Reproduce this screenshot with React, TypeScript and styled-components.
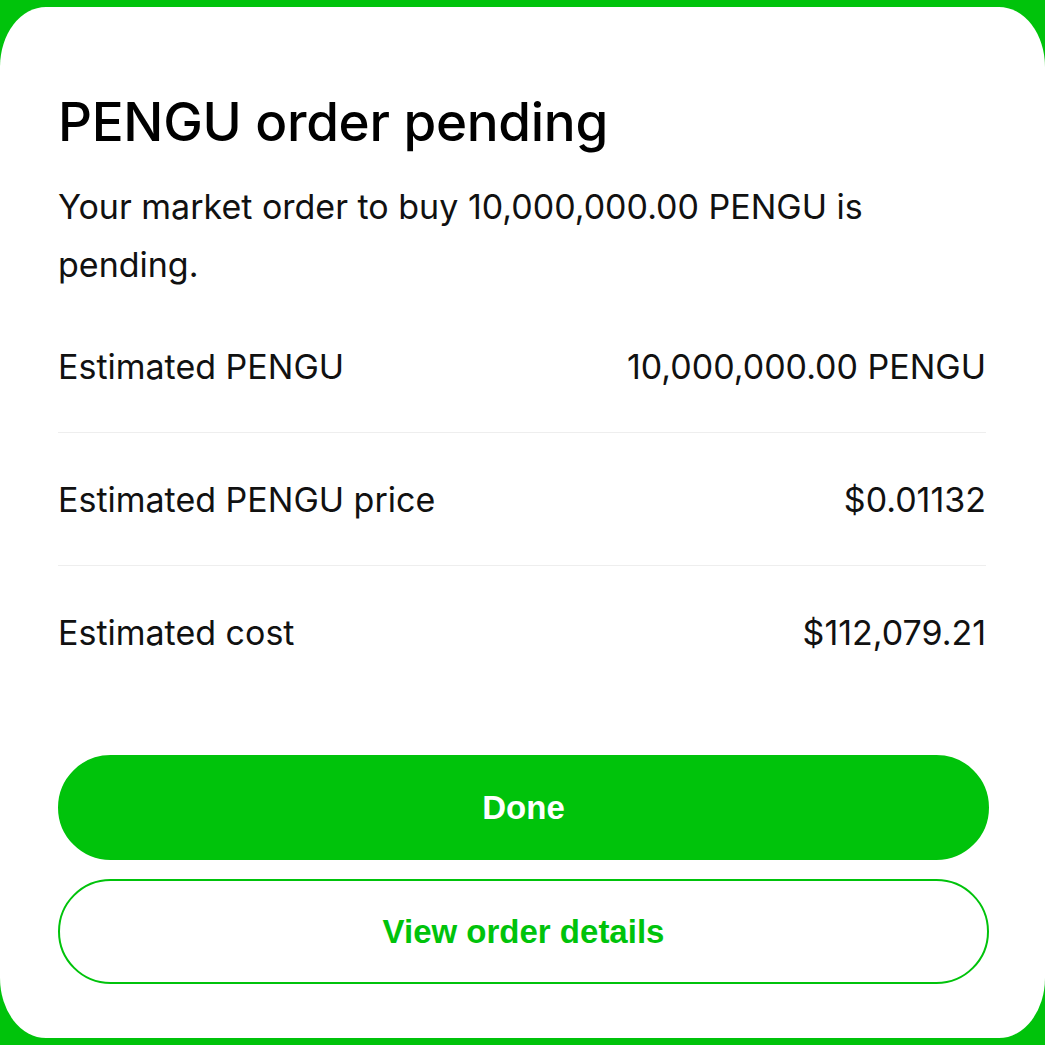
import React from "react";
import styled, { createGlobalStyle } from "styled-components";

const Global = createGlobalStyle`
  html, body { margin: 0; padding: 0; background: #00c30b; }
  body { font-family: Inter, "Noto Sans", sans-serif; }
  * { box-sizing: border-box; }
`;

const Page = styled.div`
  width: 1045px;
  height: 1045px;
  padding: 7px 0 7px 0;
  background: #00c30b;
`;

const Card = styled.div`
  height: 100%;
  background: #ffffff;
  border-radius: 46px / 60px;
  padding: 83px 57px 0 58px;
  display: flex;
  flex-direction: column;
`;

const Title = styled.h1`
  margin: 0;
  font-size: 53px;
  font-weight: 500;
  line-height: 64px;
  color: #000;
  letter-spacing: -0.3px;
`;

const Subtitle = styled.p`
  margin: 24px 0 0 0;
  font-size: 34px;
  line-height: 58px;
  color: #111;
  font-weight: 400;
  max-width: 880px;
`;

const Rows = styled.div`
  margin-top: 6px;
  display: flex;
  flex-direction: column;
  padding-right: 2px;
`;

const Row = styled.div<{ $last?: boolean }>`
  display: flex;
  justify-content: space-between;
  align-items: center;
  height: 133px;
  border-bottom: ${(p) => (p.$last ? "none" : "1.5px solid #eeeeee")};
  font-size: 34px;
  color: #111;
`;

const Label = styled.span``;
const Value = styled.span`
  text-align: right;
`;

const Buttons = styled.div`
  margin-top: 56px;
  display: flex;
  flex-direction: column;
  gap: 19px;
`;

const Button = styled.button<{ $primary?: boolean }>`
  height: 105px;
  width: 931px;
  border-radius: 56px;
  border: 2px solid #00c30b;
  background: ${(p) => (p.$primary ? "#00c30b" : "#ffffff")};
  color: ${(p) => (p.$primary ? "#ffffff" : "#00c30b")};
  font-family: "Liberation Sans", Arial, sans-serif;
  font-weight: 700;
  font-size: 33px;
  display: flex;
  align-items: center;
  justify-content: center;
  cursor: pointer;
`;

export default function App() {
  return (
    <>
      <Global />
      <Page>
        <Card>
          <Title>PENGU order pending</Title>
          <Subtitle>
            Your market order to buy 10,000,000.00 PENGU is pending.
          </Subtitle>
          <Rows>
            <Row>
              <Label>Estimated PENGU</Label>
              <Value>10,000,000.00 PENGU</Value>
            </Row>
            <Row>
              <Label>Estimated PENGU price</Label>
              <Value>$0.01132</Value>
            </Row>
            <Row $last>
              <Label>Estimated cost</Label>
              <Value>$112,079.21</Value>
            </Row>
          </Rows>
          <Buttons>
            <Button $primary>Done</Button>
            <Button>View order details</Button>
          </Buttons>
        </Card>
      </Page>
    </>
  );
}
